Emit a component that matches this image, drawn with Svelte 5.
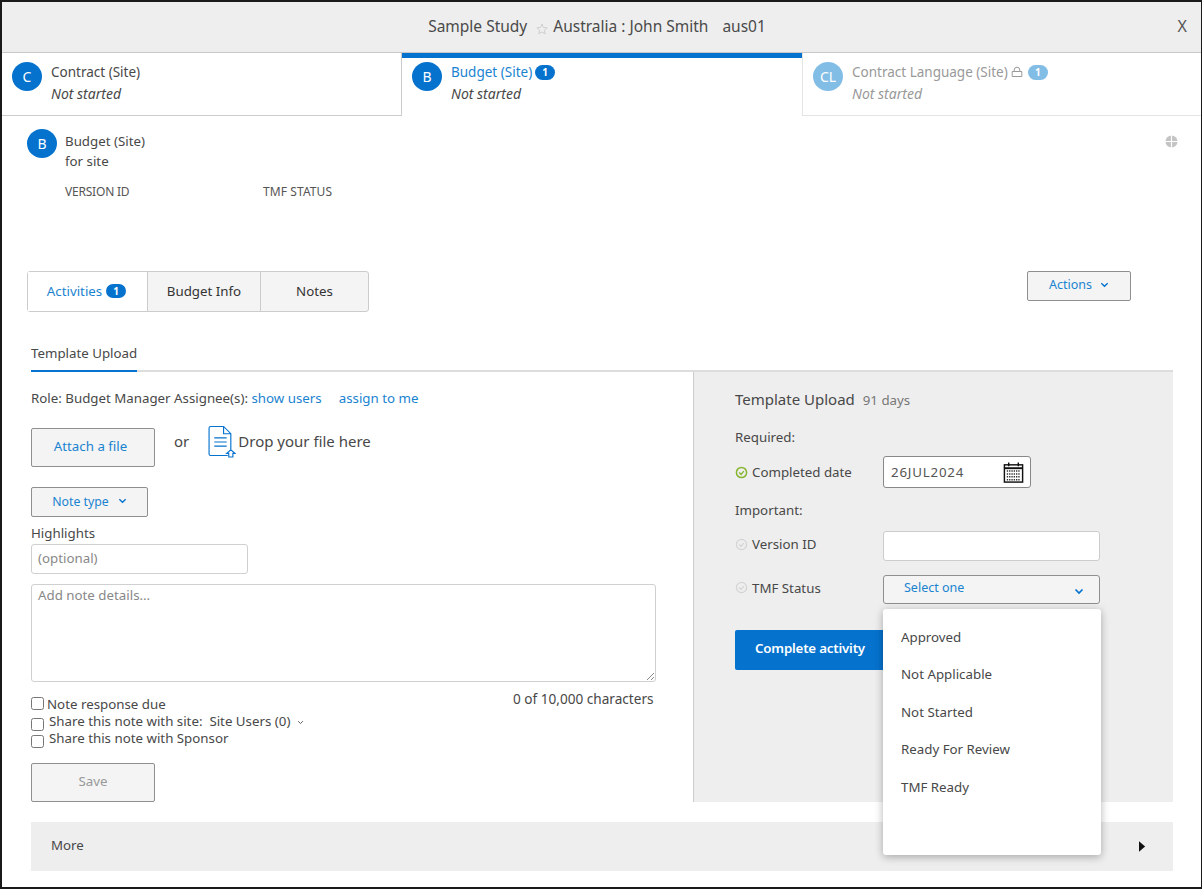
<script>
  const options = ['Approved', 'Not Applicable', 'Not Started', 'Ready For Review', 'TMF Ready'];
</script>

<div class="frame">
  <header class="top">
    <div class="title">
      <span>Sample Study</span>
      <svg class="star" viewBox="0 0 12 12" width="12" height="12"><path d="M6 1l1.500 3.400 3.600.4-2.700 2.400.8 3.600L6 9l-3.200 1.800.8-3.600L.9 4.800l3.600-.4z" fill="none" stroke="#cfcfcf" stroke-width="1"/></svg>
      <span>Australia : John Smith</span>
      <span class="code">aus01</span>
    </div>
    <span class="close">X</span>
  </header>

  <nav class="stages">
    <div class="stage first">
      <span class="circle">C</span>
      <div class="stage-text">
        <div class="stage-name">Contract (Site)</div>
        <div class="stage-status">Not started</div>
      </div>
    </div>
    <div class="stage active">
      <span class="circle">B</span>
      <div class="stage-text">
        <div class="stage-name link">Budget (Site)<span class="badge">1</span></div>
        <div class="stage-status">Not started</div>
      </div>
    </div>
    <div class="stage locked">
      <span class="circle">CL</span>
      <div class="stage-text">
        <div class="stage-name">Contract Language (Site)<svg class="lock" viewBox="0 0 12 12" width="12" height="12"><path d="M3.200 5.500V4a2.800 2.800 0 0 1 5.600 0v1.500M1.200 5.500h9.600v5H1.200z" fill="none" stroke="#9a9a9a" stroke-width="1"/></svg><span class="badge">1</span></div>
        <div class="stage-status">Not started</div>
      </div>
    </div>
  </nav>

  <main class="body">
    <section class="doc-head">
      <span class="circle">B</span>
      <div class="doc-text">
        <div class="doc-name">Budget (Site)</div>
        <div class="doc-sub">for site</div>
        <div class="doc-meta"><span class="meta-a">VERSION ID</span><span class="meta-b">TMF STATUS</span></div>
      </div>
      <svg class="globe" viewBox="0 0 14 14" width="13" height="13"><circle cx="7" cy="7" r="6.500" fill="#c4c4c4"/><path d="M7 0v14M0 7h14" stroke="#fff" stroke-width="1.200"/></svg>
    </section>

    <div class="tabs-row">
      <div class="tabs">
        <div class="tab on">Activities <span class="badge wide">1</span></div>
        <div class="tab t2">Budget Info</div>
        <div class="tab t3">Notes</div>
      </div>
      <button class="actions">Actions <svg viewBox="0 0 10 6" width="9" height="6"><path d="M1.500 1l3.500 3.500L8.500 1" fill="none" stroke="#0572ce" stroke-width="1.500"/></svg></button>
    </div>

    <div class="subtab-bar"><span class="subtab">Template Upload</span></div>

    <div class="split">
      <div class="left">
        <div class="role">Role: Budget Manager Assignee(s): <span class="link">show users</span><span class="link assign">assign to me</span></div>
        <div class="attach-row">
          <button class="btn attach">Attach a file</button>
          <span class="or">or</span>
          <svg class="file" viewBox="0 0 28 32" width="29" height="34"><path d="M20 29H3.500A1.500 1.500 0 0 1 2 27.500V2.500A1.500 1.500 0 0 1 3.500 1H16l7 7v15M16 1v7h7M7 12h12M7 16h12M7 20h12" fill="none" stroke="#0572ce" stroke-width="1.100"/><path d="M19 27l4-3.500 4 3.500h-2v3.500h-4V27z" fill="#fff" stroke="#0572ce" stroke-width="1.100"/></svg>
          <span class="drop">Drop your file here</span>
        </div>
        <button class="btn note-type">Note type <svg viewBox="0 0 10 6" width="9" height="6"><path d="M1.500 1l3.500 3.500L8.500 1" fill="none" stroke="#0572ce" stroke-width="1.500"/></svg></button>
        <div class="highlights">Highlights</div>
        <div class="field optional">(optional)</div>
        <div class="field details">Add note details...
          <svg class="grip" viewBox="0 0 10 10" width="10" height="10"><path d="M9 2L2 9M9 6L6 9" stroke="#888" stroke-width="1"/></svg>
        </div>
        <div class="checks">
          <div class="counter">0 of 10,000 characters</div>
          <label class="check c1"><input type="checkbox" /><span>Note response due</span></label>
          <label class="check c2"><input type="checkbox" /><span>Share this note with site:&nbsp; Site Users (0)</span>
            <svg viewBox="0 0 10 6" width="7" height="5"><path d="M1.500 1l3.500 3.500L8.500 1" fill="none" stroke="#555" stroke-width="1.300"/></svg></label>
          <label class="check c3"><input type="checkbox" /><span>Share this note with Sponsor</span></label>
        </div>
        <button class="btn save">Save</button>
      </div>

      <aside class="right">
        <div class="right-title">Template Upload <span class="days">91 days</span></div>
        <div class="group-label">Required:</div>
        <div class="form-row date-row">
          <span class="label"><svg class="tick" viewBox="0 0 14 14" width="13" height="13"><circle cx="7" cy="7" r="5.500" fill="none" stroke="#86b52e" stroke-width="1.600"/><path d="M4.500 7l2 2 3-3.500" fill="none" stroke="#86b52e" stroke-width="1.500"/></svg>Completed date</span>
          <div class="date">
            <span>26JUL2024</span>
            <svg viewBox="0 0 24 24" width="23" height="23"><rect x="2.500" y="4" width="19" height="18" fill="#fff" stroke="#111" stroke-width="1.500"/><path d="M2.500 7.500h19" stroke="#111" stroke-width="2"/><path d="M7 1.500v4M17 1.500v4" stroke="#111" stroke-width="1.500"/><path d="M5 10.500h14M5 13.500h14M5 16.500h14M5 19.500h14" stroke="#333" stroke-width="1.600" stroke-dasharray="1.400 1"/></svg>
          </div>
        </div>
        <div class="group-label important">Important:</div>
        <div class="form-row version-row">
          <span class="label"><svg class="tick" viewBox="0 0 14 14" width="13" height="13"><circle cx="7" cy="7" r="5.500" fill="none" stroke="#d4d4d4" stroke-width="1.300"/><path d="M4.500 7l2 2 3-3.500" fill="none" stroke="#d4d4d4" stroke-width="1.300"/></svg>Version ID</span>
          <div class="input"></div>
        </div>
        <div class="form-row tmf-row">
          <span class="label"><svg class="tick" viewBox="0 0 14 14" width="13" height="13"><circle cx="7" cy="7" r="5.500" fill="none" stroke="#d4d4d4" stroke-width="1.300"/><path d="M4.500 7l2 2 3-3.500" fill="none" stroke="#d4d4d4" stroke-width="1.300"/></svg>TMF Status</span>
          <div class="select">
            <span>Select one</span>
            <svg viewBox="0 0 10 6" width="10" height="7"><path d="M1.500 1l3.500 3.500L8.500 1" fill="none" stroke="#0572ce" stroke-width="1.700"/></svg>
          </div>
        </div>
        <button class="complete">Complete activity</button>
      </aside>
    </div>

    <div class="more">
      <span>More</span>
      <svg viewBox="0 0 8 12" width="7" height="11"><path d="M0 0l7 6-7 6z" fill="#111"/></svg>
    </div>

    <ul class="menu">
      {#each options as o}
        <li>{o}</li>
      {/each}
    </ul>
  </main>
</div>

<style>
  :global(body) { margin: 0; background: #fff; }
  .frame {
    width: 1202px; height: 889px; box-sizing: border-box; position: relative; overflow: hidden;
    border: 2px solid #1a1a1a; border-right-width: 1px;
    font-family: "Noto Sans", "Open Sans", sans-serif; font-size: 13.3px; color: #484848; background: #fff;
  }
  .top {
    height: 51px; background: #eee; border-bottom: 1px solid #c8c8c8; display: flex; align-items: center;
    justify-content: center; position: relative; font-size: 15.5px; color: #4a4a4a; padding-bottom: 3px; box-sizing: border-box;
  }
  .title { display: flex; align-items: center; margin-left: -9px; }
  .star { margin: 7px 5px 0 9px; }
  .code { margin-left: 14px; }
  .close { position: absolute; right: 14px; top: 13px; font-size: 16px; color: #555; }

  .stages { display: flex; height: 63px; }
  .stage { width: 400px; box-sizing: border-box; display: flex; padding: 9px 0 0 10px; }
  .stage.first { border-bottom: 1px solid #ccc; border-right: 1px solid #ccc; }
  .stage.active { border-top: 5px solid #0572ce; padding-top: 4px; padding-left: 10px; height: 63px; }
  .stage.locked { flex: 1; border-left: 1px solid #e4e4e4; border-bottom: 1px solid #e4e4e4; }
  .circle {
    width: 30px; height: 29px; border-radius: 50%; background: #0572ce; color: #fff; display: flex;
    align-items: center; justify-content: center; font-size: 14px; flex: none;
  }
  .stage-text { margin-left: 9px; line-height: 22px; margin-top: -1px; }
  .stage-name { color: #484848; font-size: 13.5px; display: flex; align-items: center; white-space: nowrap; }
  .stage-status { font-style: italic; color: #484848; font-size: 14px; }
  .link { color: #1a83d0; }
  .stage-name.link { color: #1a83d0; }
  .badge {
    display: inline-flex; align-items: center; justify-content: center; width: 20px; height: 15px; border-radius: 8px;
    background: #0572ce; color: #fff; font-size: 10px; font-weight: 700; line-height: 1;
  }
  .stage-name .badge { margin-left: 3px; }
  .badge.wide { height: 14px; }
  .locked .circle { background: #82bde6; }
  .locked .stage-name, .locked .stage-status { color: #999; }
  .locked .stage-name .badge { background: #82bde6; margin-left: 5px; }
  .lock { margin-left: 3px; }

  .body { padding: 0 28px 0 29px; position: relative; }
  .doc-head { display: flex; height: 155px; padding-top: 13px; box-sizing: border-box; position: relative; margin-left: -4px; }
  .doc-text { margin-left: 8px; line-height: 20px; margin-top: 2px; }
  .doc-meta { margin-top: 11px; font-size: 12px; letter-spacing: -0.2px; color: #555; }
  .meta-a { display: inline-block; width: 198px; }
  .meta-b { letter-spacing: 0.1px; }
  .globe { position: absolute; right: -5px; top: 19px; }

  .tabs-row { display: flex; justify-content: space-between; align-items: flex-start; padding-right: 42px; margin-left: -4px; }
  .tabs { display: flex; height: 41px; border: 1px solid #ccc; border-radius: 3px; background: #f4f4f4; box-sizing: border-box; }
  .tab { display: flex; align-items: center; justify-content: center; gap: 4px; border-right: 1px solid #ccc; color: #333; padding-bottom: 2px; }
  .tab.on { width: 120px; background: #fff; color: #1a83d0; padding-right: 2px; box-sizing: border-box; }
  .t2 { width: 113px; box-sizing: border-box; }
  .t3 { width: 107px; border-right: 0; }
  .actions, .btn, .select {
    background: #f4f4f4; border: 1px solid #8f8f8f; border-radius: 2px; font: inherit; color: #1a83d0; padding: 0; box-sizing: border-box;
  }
  .actions { width: 104px; height: 30px; font-size: 12.5px; display: flex; align-items: center; justify-content: center; gap: 8px; padding-bottom: 3px; }

  .subtab-bar { margin-top: 27px; height: 33px; border-bottom: 2px solid #ddd; box-sizing: border-box; }
  .subtab { display: inline-block; height: 33px; line-height: 28px; border-bottom: 2px solid #0572ce; box-sizing: border-box; color: #484848; }

  .split { display: flex; height: 430px; }
  .left { width: 663px; flex: none; border-right: 1px solid #ccc; box-sizing: border-box; }
  .role { margin-top: 16px; line-height: 20px; white-space: pre; }
  .assign { margin-left: 17px; }
  .attach-row { display: flex; margin-top: 20px; align-items: flex-start; height: 40px; }
  .attach { width: 124px; height: 39px; padding: 0 5px 3px 0; }
  .or { font-size: 15px; margin-left: 19px; margin-top: 3px; }
  .file { margin-left: 18px; margin-top: -3px; flex: none; }
  .drop { font-size: 15px; margin-left: 2px; margin-top: 3px; }
  .note-type { display: flex; align-items: center; justify-content: center; gap: 9px; width: 117px; height: 30px; margin-top: 19px; font-size: 12.3px; padding-bottom: 2px; }
  .highlights { margin-top: 6px; line-height: 20px; }
  .field { border: 1px solid #d0d0d0; border-radius: 3px; box-sizing: border-box; color: #888; background: #fff; }
  .optional { width: 217px; height: 30px; line-height: 26px; padding-left: 6px; margin-top: 1px; }
  .details { width: 625px; height: 98px; margin-top: 10px; padding: 0 6px; position: relative; line-height: 20px; }
  .grip { position: absolute; right: 0; bottom: 0; }
  .checks { position: relative; padding-top: 14px; height: 60px; box-sizing: border-box; }
  .counter { position: absolute; left: 482px; top: 7px; line-height: 20px; white-space: nowrap; font-size: 13.6px; }
  .check { display: flex; align-items: center; line-height: 17px; height: 17px; }
  .check input { margin: 0 5px 0 0; width: 13px; height: 13px; flex: none; }
  .c1 input { margin: -2px 3px 0 0; }
  .c2 svg { margin-left: 7px; margin-top: 2px; }
  .c2 input, .c3 input { margin-top: 6px; }
  .save { width: 124px; height: 39px; margin-top: 21px; color: #999; padding-bottom: 3px; }

  .right { flex: 1; background: #eee; padding: 15px 0 0 41px; position: relative; box-sizing: border-box; }
  .right-title { font-size: 15px; line-height: 24px; color: #484848; }
  .days { font-size: 13.3px; color: #777; margin-left: 4px; }
  .group-label { margin-top: 15px; line-height: 20px; }
  .form-row { display: flex; align-items: center; }
  .label { width: 148px; display: flex; align-items: center; gap: 4px; flex: none; }
  .tick { flex: none; }
  .date-row { margin-top: 9px; }
  .date { width: 148px; height: 32px; background: #fff; border: 1px solid #888; border-radius: 3px; box-sizing: border-box; display: flex; align-items: center; justify-content: space-between; padding: 0 5px 0 7px; letter-spacing: 0.8px; color: #555; }
  .important { margin-top: 12px; }
  .version-row { margin-top: 11px; }
  .version-row .label, .tmf-row .label { margin-bottom: 4px; }
  .input { width: 217px; height: 30px; background: #fff; border: 1px solid #ccc; border-radius: 3px; box-sizing: border-box; }
  .tmf-row { margin-top: 14px; }
  .select { width: 217px; height: 29px; display: flex; align-items: center; justify-content: space-between; padding: 0 15px 4px 20px; font-size: 12.5px; border-radius: 3px; }
  .select svg { margin-top: 8px; }
  .complete { margin-top: 26px; width: 150px; height: 40px; background: #0572ce; color: #fff; border: 0; border-radius: 2px; font: inherit; font-weight: 600; padding: 0 0 4px 0; letter-spacing: -0.2px; }

  .more { height: 49px; margin-top: 20px; background: #eee; display: flex; align-items: center; justify-content: space-between; padding: 0 27px 0 20px; }
  .more span { color: #484848; padding-bottom: 4px; }

  .menu {
    position: absolute; left: 881px; top: 493px; width: 218px; height: 246px; margin: 0; padding: 10px 0 0 18px; box-sizing: border-box; list-style: none;
    background: #fff; border-radius: 3px; box-shadow: 0 2px 8px rgba(0,0,0,.3);
  }
  .menu li { height: 37.4px; line-height: 37.4px; }
</style>
